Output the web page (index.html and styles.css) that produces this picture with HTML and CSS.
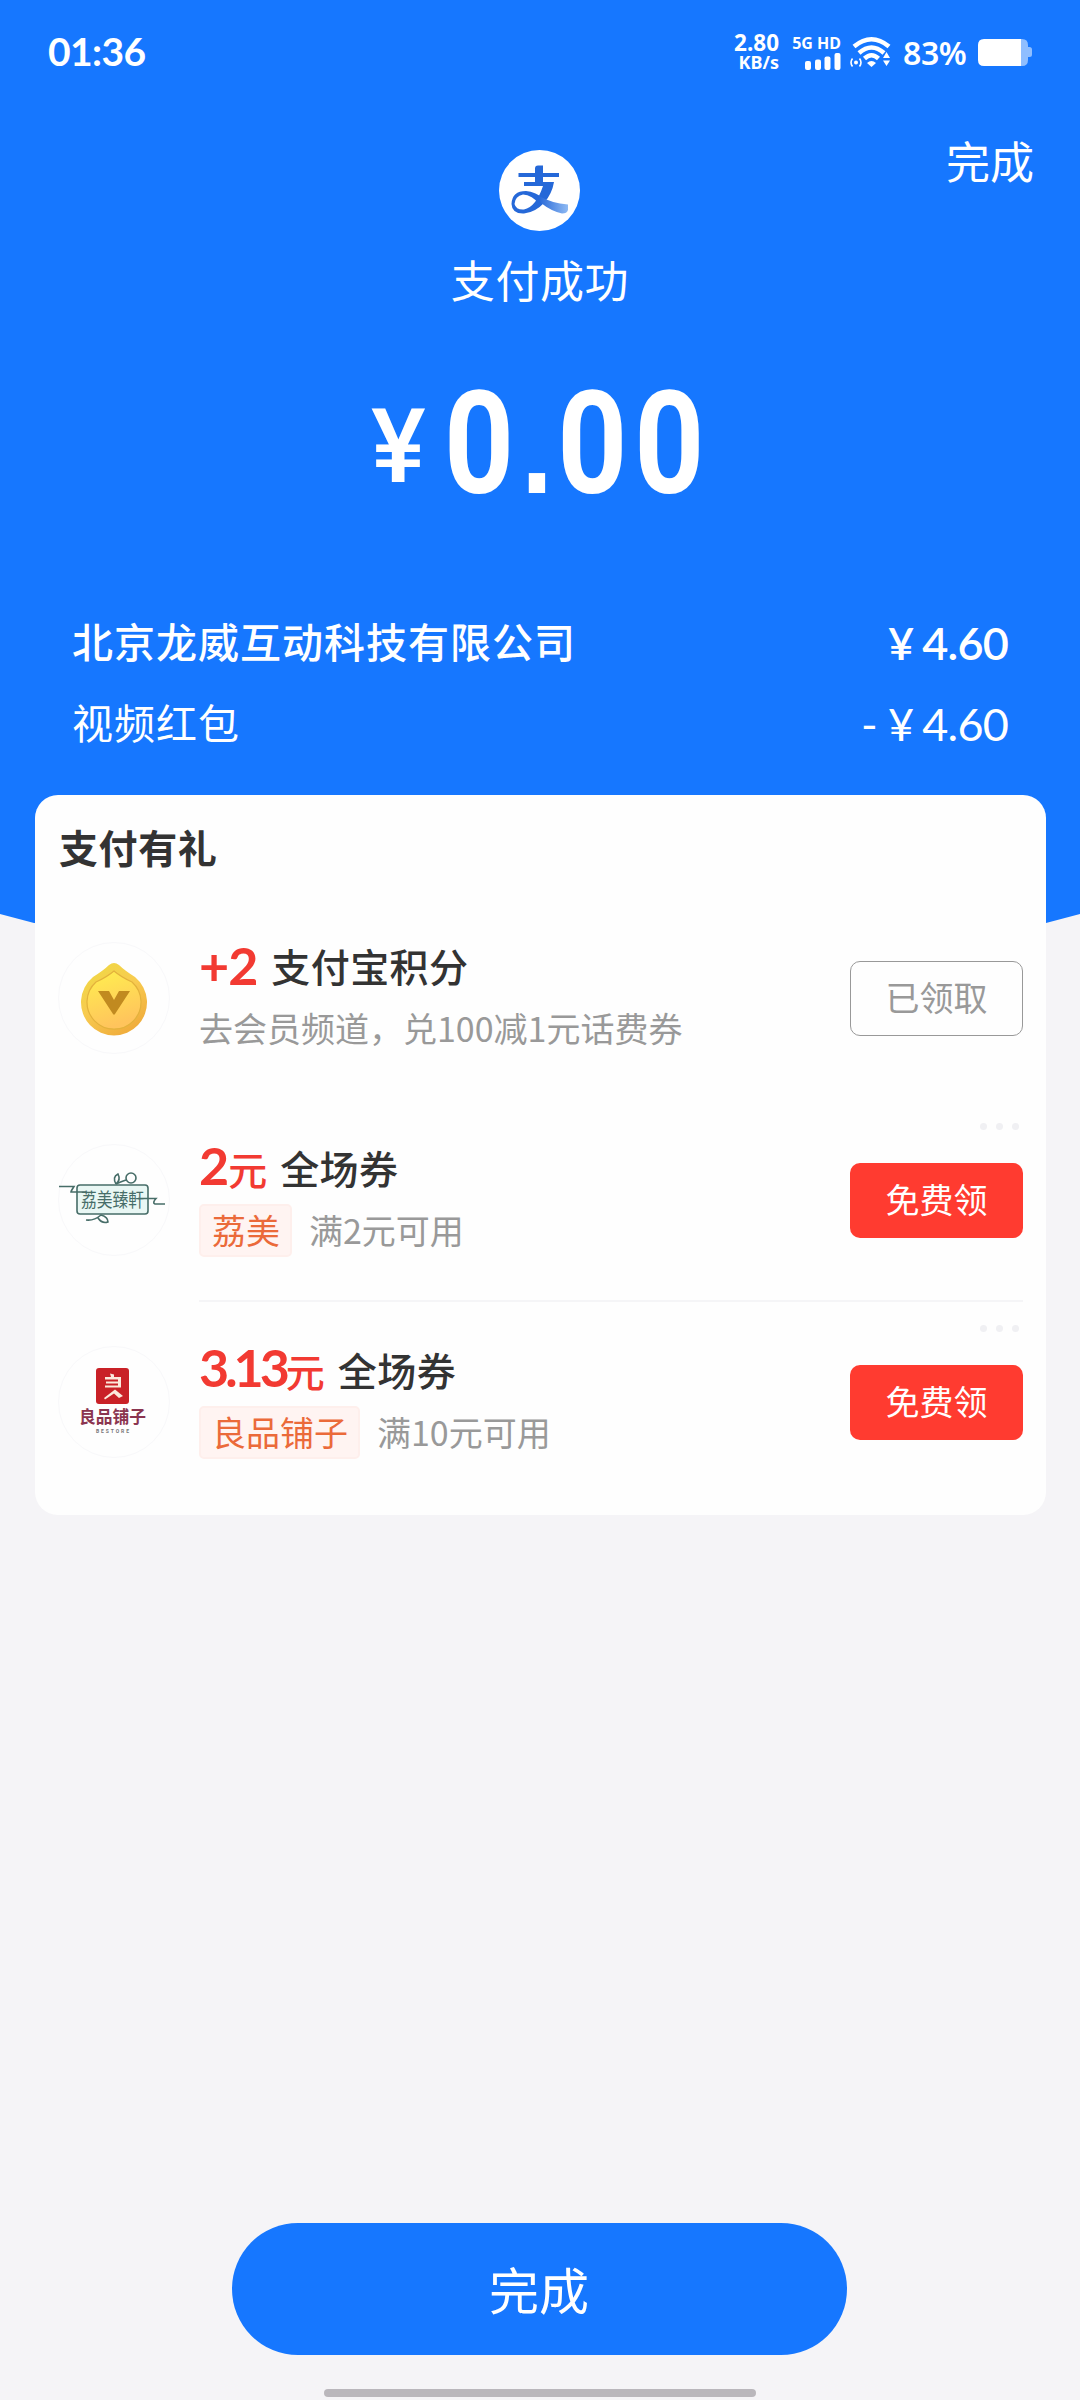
FILE: index.html
```html
<!DOCTYPE html>
<html lang="zh-CN">
<head>
<meta charset="utf-8">
<title>支付成功</title>
<link rel="stylesheet" href="styles.css">
</head>
<body>
<div class="screen">
  <header class="hero">
    <div class="status">
      <span class="clock">01:36</span>
      <div class="speed"><span>2.80</span><span class="unit">KB/s</span></div>
      <div class="signal">
        <span>5G HD</span>
        <svg width="36" height="17" viewBox="0 0 36 17" fill="#fff"><rect x="0" y="8" width="6" height="9" rx="2"/><rect x="10" y="6.500" width="6" height="10.500" rx="2"/><rect x="19.500" y="3.500" width="6" height="13.500" rx="2"/><rect x="29.500" y="0" width="6" height="17" rx="2"/></svg>
      </div>
      <svg class="wifi" width="42" height="32" viewBox="0 0 42 32" fill="none" stroke="#fff">
        <path d="M4 10.500Q21.500-4 39 10.500" stroke-width="4.500"/>
        <path d="M9 17Q21.500 6 34 17" stroke-width="4.500"/>
        <path d="M14.500 22.500Q21.500 16 28.500 22.500" stroke-width="4.500"/>
        <path d="M17 27Q21.500 23 26 27L21.500 31Z" fill="#fff" stroke="none"/>
        <path d="M36.500 16L40 22H33ZM36.500 30L40 24.500H33Z" fill="#fff" stroke="none"/>
        <circle cx="6" cy="26.500" r="2" fill="#fff" stroke="none"/>
        <path d="M2.500 22.500Q-.5 26.500 2.500 30.500M9.500 22.500Q12.500 26.500 9.500 30.500" stroke-width="1.600"/>
      </svg>
      <span class="percent">83%</span>
      <svg class="battery" width="54" height="27" viewBox="0 0 54 27"><path d="M42 0h2q6 0 6 6v2h1.500q2.500 0 2.500 2.500v5q0 2.500-2.500 2.500H50v3q0 6-6 6h-2z" fill="#8fbeff"/><path d="M43 0H6Q0 0 0 6v15q0 6 6 6h37z" fill="#fff"/></svg>
    </div>

    <div class="topline"><span class="done-link">完成</span></div>
    <svg class="logo" width="81" height="81" viewBox="0 0 81 81">
      <defs><linearGradient id="tail" x1="0" x2="1"><stop offset="0" stop-color="#1f62d6"/><stop offset="1" stop-color="#8fbaf3"/></linearGradient></defs>
      <circle cx="40.500" cy="40.500" r="40.500" fill="#fff"/>
      <path d="M19.500 23H36V18.500Q36 15.500 39 15.500H44V23H60V27H44V32H55Q53 44 45 53Q36 62.500 25 63.500Q13 64 12.500 54Q13 41 27 41Q36 41.500 47 50L41 55Q33 44.500 24 44.500Q16 46 15.500 54Q17 60 25 59.500Q37 57 44 36H25V32H36V27H19.500Z" fill="#2568d8"/>
      <path d="M38 45Q53 53.500 69 54.500V60Q68 63.500 63 63.500Q52 61 42 53Z" fill="url(#tail)"/>
    </svg>
    <h1 class="result">支付成功</h1>
    <div class="amount"><span class="yen">¥</span><span class="figure">0<i>.</i>00</span></div>

    <div class="line line-strong"><span class="payee">北京龙威互动科技有限公司</span><span class="money"><b class="cur">¥</b>4.60</span></div>
    <div class="line"><span class="payee">视频红包</span><span class="money"><b class="minus">-</b><b class="cur">¥</b>4.60</span></div>
  </header>

  <main class="card">
    <h2 class="card-title">支付有礼</h2>

    <section class="gift">
      <div class="avatar">
        <svg width="66" height="72" viewBox="0 0 66 72">
          <defs><linearGradient id="gold" x1="0" y1="0" x2=".6" y2="1"><stop offset="0" stop-color="#eedb42"/><stop offset=".55" stop-color="#f8cb50"/><stop offset="1" stop-color="#f0ae3d"/></linearGradient><linearGradient id="face" x1="0" y1="0" x2=".3" y2="1"><stop offset="0" stop-color="#fff04f"/><stop offset="1" stop-color="#ffc45c"/></linearGradient></defs>
          <path d="M28 3Q33-1 38 3Q43 8 54 15A33 33 0 1 1 12 15Q23 8 28 3Z" fill="url(#gold)"/>
          <path d="M33 9Q40 15 51 20A27 27 0 1 1 15 20Q26 15 33 9Z" fill="url(#face)" stroke="#e3b23c" stroke-width="1.200"/>
          <path d="M17 29H28L33 38L38 29H49L34 52Q33 53.500 32 52Z" fill="#c18a20"/>
        </svg>
      </div>
      <div class="info">
        <p class="name"><span class="value">+2</span>支付宝积分</p>
        <p class="note">去会员频道，兑100减1元话费券</p>
      </div>
      <button class="btn btn-ghost">已领取</button>
    </section>

    <section class="gift">
      <div class="avatar">
        <svg width="110" height="56" viewBox="0 0 110 56" fill="none" stroke="#476d68" stroke-width="1.600">
          <rect x="18" y="13" width="71" height="29" rx="3" fill="#e9f7f4"/>
          <path d="M0 14.500H15Q12 19 12 20H27M79 26.500H97Q93 31 96 32H106" />
          <circle cx="72" cy="6" r="5"/>
          <path d="M57 12Q53 5 59 2Q62 8 57 12Q61 10 67 8M27 48Q35 49 42 43Q49 45 49 50Q43 52 39 46"/>
          <text class="seal" x="22" y="35" textLength="63" lengthAdjust="spacingAndGlyphs">荔美臻軒</text>
        </svg>
      </div>
      <div class="info">
        <p class="name"><span class="value">2<em>元</em></span>全场券</p>
        <p class="note"><span class="tag">荔美</span>满2元可用</p>
      </div>
      <span class="more"><i></i><i></i><i></i></span>
      <button class="btn">免费领</button>
    </section>

    <section class="gift gift-ruled">
      <div class="avatar">
        <svg width="70" height="68" viewBox="0 0 70 68">
          <rect x="17" y="0" width="33" height="36" rx="3" fill="#c92127"/>
          <path d="M31 5.500L35 6.500V9H42V19.500H26V17.500H39V15.500H27V13.500H39V11.500H26V9H32ZM25 30L36 21.500L44 28L40 30L35 25.500L26 31.500Z" fill="#fbe9dc"/>
          <text class="brand" x="0" y="55" textLength="67" lengthAdjust="spacingAndGlyphs">良品铺子</text>
          <text class="brand-sub" x="17" y="65" textLength="33">BESTORE</text>
        </svg>
      </div>
      <div class="info">
        <p class="name"><span class="value value-tight">3.13<em>元</em></span>全场券</p>
        <p class="note"><span class="tag">良品铺子</span>满10元可用</p>
      </div>
      <span class="more"><i></i><i></i><i></i></span>
      <button class="btn">免费领</button>
    </section>
  </main>

  <footer class="footer">
    <button class="finish">完成</button>
    <div class="home-bar"></div>
  </footer>
</div>
</body>
</html>
```

FILE: styles.css
```css
* { box-sizing: border-box; margin: 0; padding: 0; }
body { width: 1080px; background: #f5f4f7; font-family: "Noto Sans CJK SC", sans-serif; }
svg { display: block; }
i, em { font-style: normal; }
button { border: 0; font-family: inherit; }

.screen {
  height: 2400px;
  display: flex;
  flex-direction: column;
  background: #f5f4f7;
}

/* Blue header; its lower edge bows down behind the card */
.hero {
  height: 950px;
  flex: none;
  display: flex;
  flex-direction: column;
  align-items: center;
  background: #1677ff;
  color: #fff;
  clip-path: polygon(0 0, 100% 0, 100% 914px, 1046px 923px, 50% 950px, 34px 923px, 0 914px);
}

.status {
  width: 100%;
  height: 104px;
  padding: 0 48px;
  display: flex;
  align-items: center;
}
.clock { flex: 1; padding-bottom: 3px; font: 700 39px/40px Lato, sans-serif; letter-spacing: -.6px; }
.speed {
  width: 48px;
  display: flex;
  flex-direction: column;
  align-items: flex-end;
  font: 700 22.5px/19px "Noto Sans", sans-serif;
}
.unit { font-size: 18px; line-height: 20px; }
.signal {
  width: 50px;
  margin-left: 12px;
  display: flex;
  flex-direction: column;
  align-items: flex-end;
  gap: 2px;
  font: 700 16px/16px "Noto Sans", sans-serif;
  white-space: nowrap;
}
.wifi { margin-left: 9px; }
.percent { width: 66px; margin-left: 11px; padding-top: 2px; font: 600 32px/36px "Noto Sans", sans-serif; letter-spacing: -.4px; }
.battery { margin-left: 9px; }

.topline {
  width: 100%;
  height: 46px;
  padding: 23px 46px 0 0;
  display: flex;
  justify-content: flex-end;
}
.done-link { font-size: 44px; line-height: 66px; height: 66px; }
.logo { flex: none; margin-right: 2px; }
.result { margin-top: 16px; font-size: 44px; line-height: 64px; font-weight: 400; letter-spacing: .6px; }

.amount {
  width: 338px;
  height: 140px;
  margin-top: 64px;
  display: flex;
  font-family: Roboto, sans-serif;
}
.yen { width: 75px; font-size: 103px; line-height: 143px; font-weight: 500; }
.figure {
  font-size: 142px;
  line-height: 140px;
  font-weight: 700;
  letter-spacing: 8px;
  transform: scaleX(.86);
  transform-origin: 0 50%;
}
.yen + .figure { margin-left: 18px; }
.figure i { font-family: "Liberation Sans", sans-serif; font-size: 134px; line-height: 1px; letter-spacing: 5px; }

.line {
  width: 100%;
  height: 81px;
  padding: 0 72px;
  display: flex;
  align-items: center;
  justify-content: space-between;
  font-size: 41px;
  letter-spacing: 1px;
}
.amount + .line { margin-top: 87px; }
.line-strong { font-weight: 500; }
.payee { padding-bottom: 5px; }
.money { font-family: Lato, sans-serif; font-size: 45px; letter-spacing: -.8px; }
.money b { font-weight: inherit; }
.cur { margin-right: 9px; }
.minus { margin-right: 11px; }
.line-strong .money { font-weight: 600; }

.card {
  width: 1011px;
  height: 720px;
  flex: none;
  margin: -155px 0 0 35px;
  background: #fefefe;
  border-radius: 23px;
  position: relative;
}
.card-title { height: 102px; padding: 21px 24px 0; font-size: 39px; line-height: 60px; font-weight: 700; color: #333; letter-spacing: .6px; }

.gift {
  height: 202px;
  display: flex;
  align-items: center;
  padding: 0 23px 0 23px;
  position: relative;
}
.gift-ruled::before {
  content: "";
  position: absolute;
  left: 164px;
  right: 23px;
  top: -1px;
  height: 2px;
  background: #f5f5f7;
}
.avatar {
  width: 112px;
  height: 112px;
  flex: none;
  display: flex;
  align-items: center;
  justify-content: center;
  border: 1px solid #f8f8fa;
  border-radius: 50%;
}
.avatar svg { flex: none; overflow: visible; }
.seal { font: 400 19px "Noto Sans CJK TC", sans-serif; fill: #476d68; stroke: none; }
.brand { font: 700 17px "Noto Sans CJK SC", sans-serif; fill: #8b3550; }
.brand-sub { font: 700 5px Roboto, sans-serif; fill: #777; }

.info { flex: 1; padding: 0 0 2px 29px; white-space: nowrap; }
.name { height: 60px; display: flex; align-items: center; font-size: 39px; line-height: 60px; font-weight: 500; color: #333; letter-spacing: .4px; }
.value { margin-right: 14px; font-family: Lato, "Noto Sans CJK SC", sans-serif; font-size: 52px; font-weight: 700; color: #f23a32; letter-spacing: -1px; }
.value-tight { letter-spacing: -4px; }
.value em { font-size: 39px; font-weight: 500; letter-spacing: -1px; }
.note { height: 64px; display: flex; align-items: center; font-size: 34px; color: #999; }
.tag {
  height: 53px;
  padding: 0 10px 0 11px;
  margin: 2px 17px 0 0;
  display: flex;
  align-items: center;
  background: #fff4f2;
  border: 2px solid #feefec;
  border-radius: 5px;
  line-height: 46px;
  color: #eb6a3a;
}

.btn {
  width: 173px;
  height: 75px;
  padding-bottom: 3px;
  border-radius: 10px;
  background: #ff3b30;
  color: #fff;
  font-size: 34px;
}
.btn-ghost { background: none; border: 1px solid #999; color: #999; }
.more { position: absolute; right: 27px; top: 24px; display: flex; gap: 9px; }
.more i { width: 7px; height: 7px; border-radius: 50%; background: #f0f0f3; }

.footer {
  margin-top: auto;
  padding-bottom: 3px;
  display: flex;
  flex-direction: column;
  align-items: center;
  gap: 34px;
}
.finish { width: 615px; height: 132px; margin-right: 2px; padding-bottom: 2px; border-radius: 66px; background: #1677ff; color: #fff; font-size: 50px; }
.home-bar { width: 432px; height: 8px; border-radius: 4px; background: #bab7bc; }
```
